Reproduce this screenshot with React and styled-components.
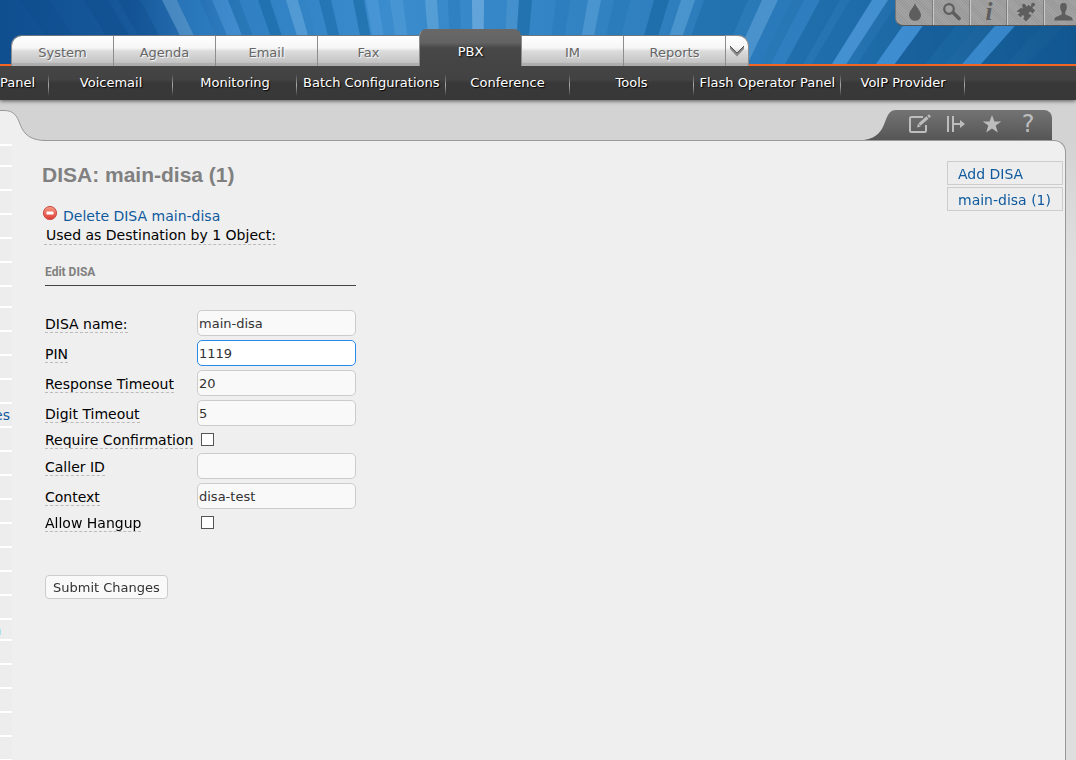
import React, { useEffect, useRef } from "react";
import styled, { createGlobalStyle } from "styled-components";

const GlobalStyle = createGlobalStyle`
  * {
    box-sizing: border-box;
  }

  body {
    margin: 0;
    background: #d3d3d3;
    color: #000;
    font-family: Verdana, "DejaVu Sans", sans-serif;
    font-size: 14px;
  }

  a {
    color: #0f5a9e;
    text-decoration: none;
  }
`;

const Page = styled.div`
  min-height: 100vh;
  display: flex;
  flex-direction: column;
  overflow: hidden;
`;

const Header = styled.header`
  position: relative;
  z-index: 1;
  height: 66px;
  display: flex;
  justify-content: space-between;
  align-items: flex-end;
  overflow: hidden;
  background: #f26522;
`;

const RaysSvg = styled.svg`
  position: absolute;
  top: 0;
  left: 0;
  width: 100%;
  height: 64px;
`;

const Tabs = styled.nav`
  position: relative;
  display: flex;
  align-items: flex-end;
  margin-left: 11px;
`;

const Tab = styled.a`
  width: 102px;
  height: ${(p) => (p.$active ? "37px" : "31px")};
  padding-top: ${(p) => (p.$active ? "7px" : "2px")};
  display: flex;
  align-items: center;
  justify-content: center;
  border-top: 1px solid #6c7780;
  border-left: 1px solid #8d8d8d;
  border-radius: ${(p) => (p.$active ? "7px 7px 0 0" : "0")};
  background: linear-gradient(#fff 0, #f6f6f6 40%, #dcdcdc 50%, #c4c4c4 88%, #adadad 92%);
  color: #666;
  font-size: 13px;
  text-shadow: 1px 1px 1px #fff;

  &:first-child {
    border-top-left-radius: 11px;
  }

  ${(p) =>
    p.$active &&
    `
    border-top-color: #686868;
    background: linear-gradient(#686868 0, #636363 35%, #484848 50%, #444 100%);
    color: #fff;
    text-shadow: 1px 1px 2px #000;
  `}
`;

const MoreTabs = styled.button`
  width: 24px;
  height: 31px;
  padding: 0;
  display: flex;
  align-items: center;
  justify-content: center;
  border: 1px solid #8d8d8d;
  border-bottom: 0;
  border-top-right-radius: 11px;
  background: linear-gradient(#fff 0, #f6f6f6 40%, #dcdcdc 50%, #c4c4c4 88%, #adadad 92%);
`;

const Tools = styled.div`
  position: relative;
  align-self: flex-start;
  height: 26px;
  margin-right: -6px;
  padding-left: 1px;
  display: flex;
  border-bottom: 1px solid #555;
  border-left: 1px solid #777;
  border-bottom-left-radius: 8px;
  background: repeating-linear-gradient(45deg, #a3a3a3 0, #a3a3a3 1px, #999 1px, #999 2px);
`;

const Tool = styled.button`
  width: 37px;
  padding: 0 0 2px;
  display: flex;
  align-items: center;
  justify-content: center;
  border: 0;
  border-right: 1px solid #c9c9c9;
  background: none;
  color: #5e5e5e;
  box-shadow: inset -1px 0 #7d7d7d;

  &:last-child {
    border: 0;
    box-shadow: none;
  }
`;

const Letter = styled.span`
  font-family: "Liberation Serif", serif;
  font-size: 25px;
  font-style: italic;
  font-weight: bold;
  line-height: 24px;
`;

const Menu = styled.nav`
  position: relative;
  height: 34px;
  display: flex;
  background: linear-gradient(#454545 0, #424242 40%, #383838 50%, #383838 100%);
  box-shadow: 0 1px 4px rgba(0, 0, 0, 0.6);
`;

const MenuItem = styled.a`
  min-width: ${(p) => (p.$short ? "49px" : "124px")};
  height: 34px;
  padding: ${(p) => (p.$short ? "0 14px 2px 0" : "0 6px 2px")};
  display: flex;
  align-items: center;
  justify-content: ${(p) => (p.$short ? "flex-end" : "center")};
  background: linear-gradient(transparent, #aaa, transparent) right 8px / 1px 22px no-repeat;
  color: #fff;
  font-size: 13px;
  white-space: nowrap;
  text-shadow: 1px 1px 1px #000;
`;

const Strip = styled.div`
  height: 40px;
  display: flex;
  align-items: flex-end;
  justify-content: space-between;
`;

const Curve = styled.svg`
  position: relative;
  display: block;
  margin-bottom: -1px;
`;

const PanelTools = styled.div`
  height: 30px;
  margin-right: 24px;
  display: flex;
`;

const PanelToolsBody = styled.div`
  padding: 0 6px 2px;
  display: flex;
  border-top-right-radius: 8px;
  background: linear-gradient(#737373, #565656);
`;

const PanelTool = styled.button`
  width: 36px;
  padding: 0;
  display: flex;
  align-items: center;
  justify-content: center;
  border: 0;
  background: none;
  color: #bdbdbd;
  font: 24px "DejaVu Sans", sans-serif;
`;

const Panel = styled.div`
  flex: 1;
  margin-right: 10px;
  display: flex;
  border-top: 1px solid #999;
  border-right: 1px solid #999;
  border-top-right-radius: 12px;
  background: #efefef;
`;

const Backdrop = styled.div`
  flex: 1;
  display: flex;
  background: linear-gradient(#d3d3d3, #dedede 120px, #dedede);
`;

const Sidebar = styled.nav`
  flex: none;
  width: 12px;
  height: 619px;
  padding-top: 3px;
  overflow: hidden;
`;

const SideItem = styled.a`
  height: ${(p) => (p.$group ? "21px" : "24px")};
  padding-right: ${(p) => (p.$group ? "11px" : "2px")};
  display: flex;
  align-items: center;
  justify-content: flex-end;
  border-top: 2px solid #fff;
  background: #ededed;
`;

const Main = styled.main`
  flex: 1;
  padding: 20px 0 0 30px;
`;

const Title = styled.h2`
  margin: 0 0 16px;
  color: #808080;
  font: bold 21px/28px "Liberation Sans", Arial, sans-serif;
`;

const DeleteLink = styled.a`
  display: flex;
  gap: 5px;
  line-height: 22px;
`;

const Hint = styled.span`
  border-bottom: 1px dashed #bbb;
  line-height: 17px;
`;

const Usage = styled.div`
  padding-left: 2px;
  display: flex;

  ${Hint} {
    padding-left: 2px;
  }
`;

const Form = styled.form`
  width: 311px;
  margin-left: 3px;
`;

const SectionTitle = styled.h5`
  height: 33px;
  margin: 8px 0 22px;
  padding-top: 10px;
  border-bottom: 1px solid #444;
  color: #808080;
  font: bold 12px/18px Roboto, "Arial Narrow", sans-serif;
`;

const Row = styled.div`
  height: ${(p) => (p.$check ? "23px" : "30px")};
  display: flex;
  align-items: center;
`;

const Label = styled.label`
  flex: none;
  width: 152px;
  padding-top: 2px;
  white-space: nowrap;
`;

const Input = styled.input`
  flex: 1;
  min-width: 0;
  height: 26px;
  padding: 0 1px;
  border: 1px solid #ccc;
  border-radius: 5px;
  outline: 0;
  background: #f9f9f9;
  color: #333;
  font: 13px Verdana, "DejaVu Sans", sans-serif;

  &:focus {
    border-color: #2a8ae8;
    background: #fff;
  }
`;

const Checkbox = styled.input`
  appearance: none;
  width: 13px;
  height: 13px;
  margin: 0 0 0 4px;
  border: 1px solid #555;
  background: #fff;
`;

const Submit = styled.button`
  height: 24px;
  margin-top: 41px;
  padding: 0 7px;
  border: 1px solid #ccc;
  border-radius: 4px;
  background: #f9f9f9;
  color: #333;
  font: 13px Verdana, "DejaVu Sans", sans-serif;
`;

const RightNav = styled.nav`
  width: 116px;
  margin: 20px 2px 0 0;
  display: flex;
  flex-direction: column;
  gap: 2px;
`;

const RightLink = styled.a`
  height: 24px;
  padding-left: 10px;
  border: 1px solid #ccc;
  background: #ededed;
  line-height: 24px;
  white-space: nowrap;
`;

// [left, right, colour, opacity] along the top edge, all meeting at one point
const rays = [
  [20, 48, "#0b4580", 0.15],
  [84, 108, "#0e4a88", 0.3],
  [118, 140, "#0e4a88", 0.3],
  [162, 177, "#70a9d8", 0.5],
  [177, 200, "#2e80c4", 0.5],
  [212, 228, "#4f97d8", 0.5],
  [228, 239, "#1d69a6", 0.4],
  [258, 270, "#1668a2", 0.6],
  [286, 298, "#6fb0e0", 0.5],
  [298, 306, "#3181c0", 0.4],
  [319, 331, "#1768a4", 0.55],
  [353, 364, "#1668a2", 0.6],
  [366, 378, "#55a0dd", 0.5],
  [390, 403, "#60aade", 0.35],
  [425, 437, "#70b0e0", 0.5],
  [448, 460, "#1f70b0", 0.3],
  [472, 484, "#80b8e6", 0.6],
  [507, 519, "#60a4da", 0.35],
  [519, 532, "#1668a2", 0.6],
  [556, 570, "#1f70b0", 0.3],
  [588, 601, "#62a7dc", 0.5],
  [614, 630, "#1f70b0", 0.3],
  [654, 669, "#1464a0", 0.6],
  [681, 695, "#62a7dc", 0.55],
  [704, 748, "#1869a6", 0.45],
  [762, 778, "#60a4da", 0.6],
  [778, 792, "#2d7ec0", 0.4],
  [804, 820, "#3a8ccf", 0.4],
  [820, 840, "#15609c", 0.35],
  [850, 872, "#1763a0", 0.4],
  [872, 888, "#4f9bdc", 0.75],
  [900, 921, "#15609c", 0.35],
  [921, 942, "#4595da", 0.8],
  [942, 976, "#0f5690", 0.5],
  [976, 998, "#15609c", 0.35],
  [1017, 1038, "#3f90d4", 0.8],
  [1038, 1066, "#0f5690", 0.35],
  [1090, 1140, "#0f5690", 0.4],
];

const Rays = () => (
  <RaysSvg viewBox="0 0 1076 64" preserveAspectRatio="xMidYMin slice" aria-hidden="true">
    <defs>
      <linearGradient id="sky">
        <stop offset="0" stopColor="#0f4f90" />
        <stop offset="0.12" stopColor="#16589a" />
        <stop offset="0.22" stopColor="#2f7fc2" />
        <stop offset="0.36" stopColor="#3a8ccd" />
        <stop offset="0.6" stopColor="#3080bf" />
        <stop offset="0.8" stopColor="#2472b0" />
        <stop offset="1" stopColor="#14588f" />
      </linearGradient>
    </defs>
    <rect width="1076" height="64" fill="url(#sky)" />
    {rays.map(([a, b, fill, opacity]) => (
      <polygon key={a} points={`${a},0 ${b},0 478,630`} fill={fill} opacity={opacity} />
    ))}
  </RaysSvg>
);

const DropIcon = () => (
  <svg width="12" height="18" viewBox="0 0 12 18" fill="currentColor">
    <path d="M6 0C5 4 0 8 0 12.2A6 5.6 0 0 0 12 12.2C12 8 7 4 6 0Z" />
  </svg>
);

const SearchIcon = () => (
  <svg width="18" height="18" viewBox="0 0 18 18" fill="none" stroke="currentColor">
    <circle cx="6" cy="6" r="4.8" strokeWidth="2.2" />
    <path d="M10 9.5L16 15.5" strokeWidth="3.6" strokeLinecap="round" />
  </svg>
);

const PuzzleIcon = () => (
  <svg width="20" height="20" viewBox="0 0 20 20" fill="currentColor">
    <path d="M.5 9.5L4.5 6.2C5.4 5.6 6 6.8 6.6 6.6C7.4 6.2 6.6 5.2 6.2 4.4C5.6 2.8 7 1.4 8.6 2C10 2.6 9.8 4.2 10.6 4.4C11.4 4.6 12 3.6 12.6 2.8L14.6 4.4C15.6 4.4 15 2.6 15.6 1.6C16.6 0 19 .8 19 2.6C19 4.6 16.8 4.4 16.4 5.4C16.2 6.2 18.6 7.4 19.2 8.2L16.6 11.4C15.6 11.6 15.6 9.6 14.2 9.8C12.2 10.2 12.6 12.2 14 12.6C15 13 15.6 13 15.2 14L10 19.6L7.4 17C6.8 16 8.6 15.6 8.2 14.2C7.6 12.6 5.6 13 5.4 14.4C5.2 15.4 4.4 15 3.8 14.4L1.8 12.6L4.4 10.6Z" />
  </svg>
);

const UserIcon = () => (
  <svg width="19" height="18" viewBox="0 0 19 18" fill="currentColor">
    <path d="M9.5 0C6.6 0 6 2 6.2 4.6C6.3 6.6 7 8 7.8 9V11.6L2 14C.7 14.6 .3 16 .3 17.6H18.7C18.7 16 18.3 14.6 17 14L11.2 11.6V9C12 8 12.7 6.6 12.8 4.6C13 2 12.4 0 9.5 0Z" />
  </svg>
);

const EditIcon = () => (
  <svg width="24" height="20" viewBox="0 0 24 20" fill="none" stroke="currentColor">
    <path d="M15 3H3.5C2.6 3 2 3.6 2 4.5V16.5C2 17.4 2.6 18 3.5 18H16.5C17.4 18 18 17.4 18 16.5V11" strokeWidth="2" />
    <path d="M11.5 10.5L19.5 3.5" strokeWidth="3" />
    <path d="M20.3 2.8L22 1.4" strokeWidth="3" />
    <path d="M9 13.4L10 9.8L12.6 12.5Z" fill="currentColor" stroke="none" />
  </svg>
);

const ExpandIcon = () => (
  <svg width="20" height="18" viewBox="0 0 20 18" fill="none" stroke="currentColor" strokeWidth="2">
    <path d="M2 1V17M7 1V17M7 9H17" />
    <path d="M14 5L19 9L14 13Z" fill="currentColor" stroke="none" />
  </svg>
);

const StarIcon = () => (
  <svg width="20" height="18" viewBox="0 0 20 18" fill="currentColor">
    <path d="M10 0L12.4 6.4H19.2L13.7 10.6L15.8 17.6L10 13.4L4.2 17.6L6.3 10.6L.8 6.4H7.6Z" />
  </svg>
);

const DeleteIcon = () => (
  <svg width="16" height="16" viewBox="0 0 16 16">
    <defs>
      <linearGradient id="red" x2="0" y2="1">
        <stop offset="0" stopColor="#f69a88" />
        <stop offset="1" stopColor="#df3b32" />
      </linearGradient>
    </defs>
    <circle cx="8" cy="8" r="6.6" fill="url(#red)" stroke="#c9504a" />
    <rect x="4.5" y="6.5" width="7" height="3" rx="0.5" fill="#fff" />
  </svg>
);

const tabs = ["System", "Agenda", "Email", "Fax", "PBX", "IM", "Reports"];

const menu = [
  "Voicemail",
  "Monitoring",
  "Batch Configurations",
  "Conference",
  "Tools",
  "Flash Operator Panel",
  "VoIP Provider",
];

const sideItems = Array.from({ length: 27 }, (_, i) => ({
  group: i === 0 || i === 6 || i === 20,
  text: { 11: "es", 20: "n" }[i],
}));

const fields = [
  { id: "name", label: "DISA name:", value: "main-disa" },
  { id: "pin", label: "PIN", value: "1119" },
  { id: "response", label: "Response Timeout", value: "20" },
  { id: "digit", label: "Digit Timeout", value: "5" },
  { id: "confirm", label: "Require Confirmation", check: true },
  { id: "callerid", label: "Caller ID", value: "" },
  { id: "context", label: "Context", value: "disa-test" },
  { id: "hangup", label: "Allow Hangup", check: true },
];

const DisaForm = () => {
  const pin = useRef(null);

  useEffect(() => {
    pin.current.focus();
    pin.current.setSelectionRange(4, 4);
  }, []);

  return (
    <Form onSubmit={(e) => e.preventDefault()}>
      <SectionTitle>Edit DISA</SectionTitle>
      {fields.map((f) => (
        <Row key={f.id} $check={f.check}>
          <Label htmlFor={f.id}>
            <Hint>{f.label}</Hint>
          </Label>
          {f.check ? (
            <Checkbox type="checkbox" id={f.id} />
          ) : (
            <Input id={f.id} ref={f.id === "pin" ? pin : null} defaultValue={f.value} />
          )}
        </Row>
      ))}
      <Submit type="submit">Submit Changes</Submit>
    </Form>
  );
};

const App = () => {
  return (
    <Page>
      <GlobalStyle />
      <Header>
        <Rays />
        <Tabs>
          {tabs.map((t) => (
            <Tab key={t} href="#" $active={t === "PBX"}>
              {t}
            </Tab>
          ))}
          <MoreTabs aria-label="More">
            <svg width="14" height="11" viewBox="0 0 14 11">
              <path d="M0 0V3L7 10.5L14 3V0L7 7Z" fill="#888" />
              <path d="M0 0L7 7L14 0" fill="none" stroke="#555" />
            </svg>
          </MoreTabs>
        </Tabs>
        <Tools>
          <Tool aria-label="Theme"><DropIcon /></Tool>
          <Tool aria-label="Search"><SearchIcon /></Tool>
          <Tool aria-label="Info"><Letter>i</Letter></Tool>
          <Tool aria-label="Addons"><PuzzleIcon /></Tool>
          <Tool aria-label="User"><UserIcon /></Tool>
        </Tools>
      </Header>
      <Menu>
        <MenuItem href="#" $short>Panel</MenuItem>
        {menu.map((m) => (
          <MenuItem key={m} href="#">{m}</MenuItem>
        ))}
      </Menu>
      <Strip>
        <Curve width="46" height="31" viewBox="0 0 46 31">
          <path
            d="M-1 .5H4C14 .5 17 6 20 14C24 25 31 30.5 46 30.5V32H-1Z"
            fill="#efefef"
            stroke="#999"
          />
        </Curve>
        <PanelTools>
          <svg width="32" height="30" viewBox="0 0 32 30">
            <defs>
              <linearGradient id="tools" x2="0" y2="1">
                <stop offset="0" stopColor="#737373" />
                <stop offset="1" stopColor="#565656" />
              </linearGradient>
            </defs>
            <path d="M0 30C14 28 18 20 21 12C24 4 26 0 32 0V30Z" fill="url(#tools)" />
          </svg>
          <PanelToolsBody>
            <PanelTool aria-label="Edit"><EditIcon /></PanelTool>
            <PanelTool aria-label="Expand"><ExpandIcon /></PanelTool>
            <PanelTool aria-label="Bookmark"><StarIcon /></PanelTool>
            <PanelTool aria-label="Help">?</PanelTool>
          </PanelToolsBody>
        </PanelTools>
      </Strip>
      <Backdrop>
        <Panel>
          <Sidebar>
            {sideItems.map((s, i) => (
              <SideItem key={i} href="#" $group={s.group}>
                {s.text}
              </SideItem>
            ))}
          </Sidebar>
          <Main>
            <Title>DISA: main-disa (1)</Title>
            <DeleteLink href="#">
              <DeleteIcon />
              Delete DISA main-disa
            </DeleteLink>
            <Usage>
              <Hint>Used as Destination by 1 Object:</Hint>
            </Usage>
            <DisaForm />
          </Main>
          <RightNav>
            <RightLink href="#">Add DISA</RightLink>
            <RightLink href="#">main-disa (1)</RightLink>
          </RightNav>
        </Panel>
      </Backdrop>
    </Page>
  );
};

export default App;
